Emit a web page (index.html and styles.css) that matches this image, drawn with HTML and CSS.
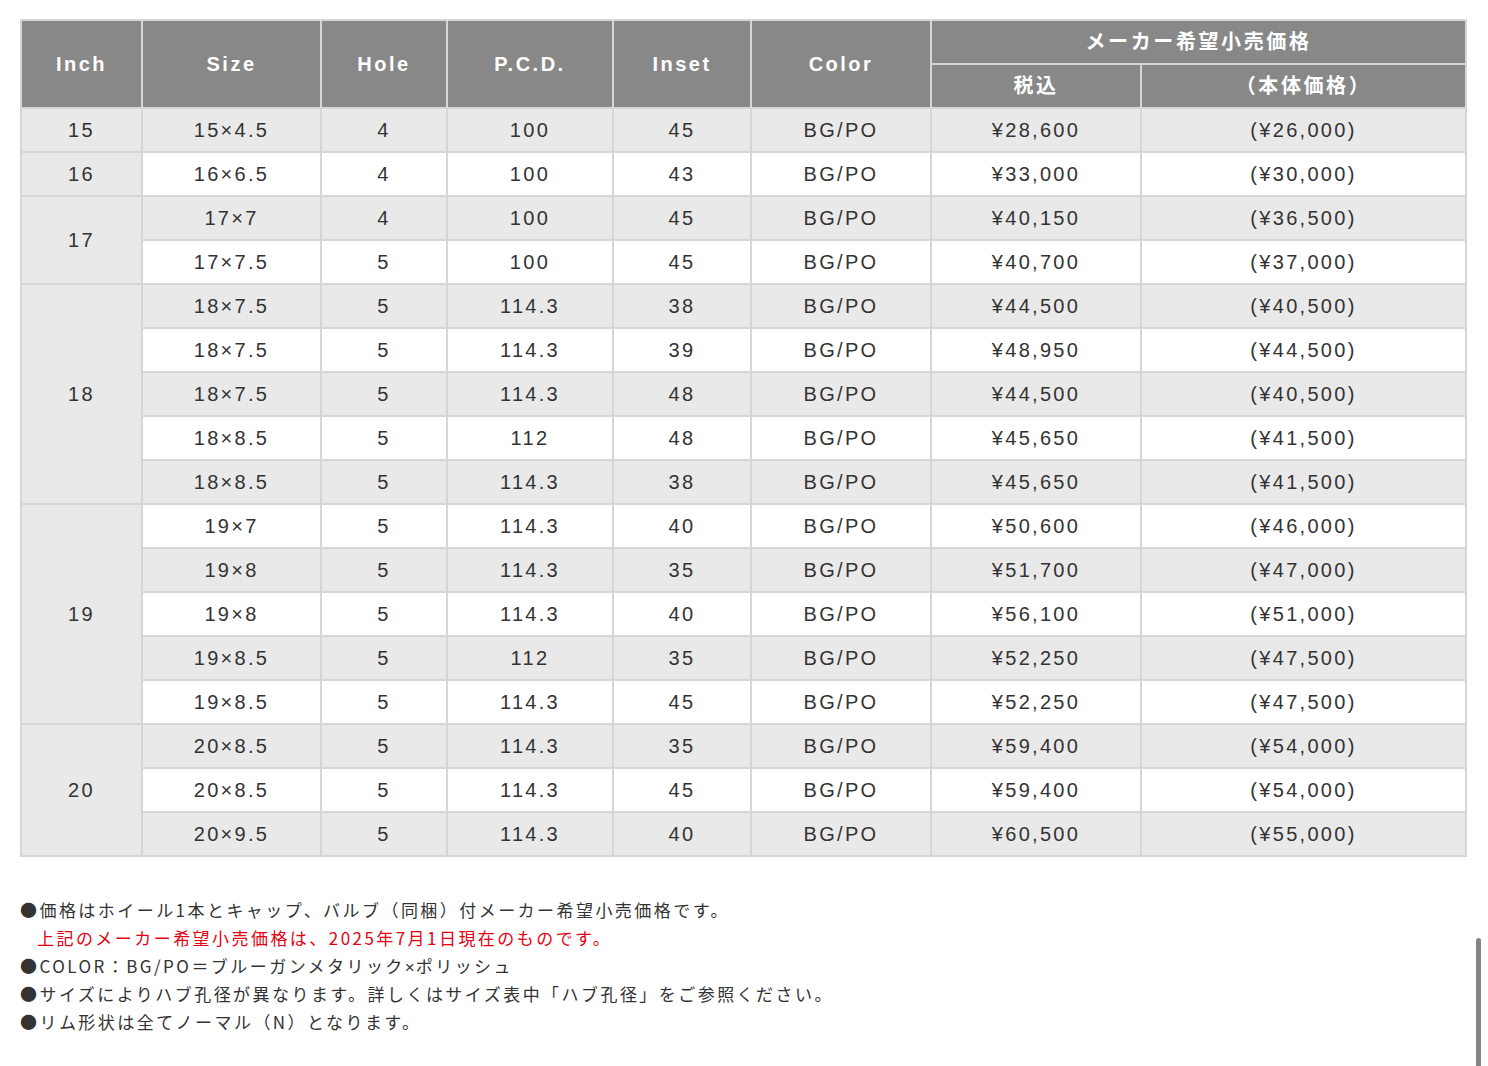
FILE: index.html
```html
<!DOCTYPE html>
<html lang="ja">
<head>
<meta charset="utf-8">
<title>Size table</title>
<link rel="stylesheet" href="styles.css">
</head>
<body>
<div class="page">
  <table class="spec">
    <colgroup>
      <col class="c-inch"><col class="c-size"><col class="c-hole"><col class="c-pcd"><col class="c-inset"><col class="c-color"><col class="c-tax"><col class="c-base">
    </colgroup>
    <thead>
      <tr>
        <th rowspan="2">Inch</th>
        <th rowspan="2">Size</th>
        <th rowspan="2">Hole</th>
        <th rowspan="2">P.C.D.</th>
        <th rowspan="2">Inset</th>
        <th rowspan="2">Color</th>
        <th colspan="2" class="jp">メーカー希望小売価格</th>
      </tr>
      <tr>
        <th class="jp">税込</th>
        <th class="jp">（本体価格）</th>
      </tr>
    </thead>
    <tbody>
      <tr><td class="inch">15</td><td>15×4.5</td><td>4</td><td>100</td><td>45</td><td>BG/PO</td><td>¥28,600</td><td>(¥26,000)</td></tr>
      <tr><td class="inch">16</td><td>16×6.5</td><td>4</td><td>100</td><td>43</td><td>BG/PO</td><td>¥33,000</td><td>(¥30,000)</td></tr>
      <tr><td class="inch" rowspan="2">17</td><td>17×7</td><td>4</td><td>100</td><td>45</td><td>BG/PO</td><td>¥40,150</td><td>(¥36,500)</td></tr>
      <tr><td>17×7.5</td><td>5</td><td>100</td><td>45</td><td>BG/PO</td><td>¥40,700</td><td>(¥37,000)</td></tr>
      <tr><td class="inch" rowspan="5">18</td><td>18×7.5</td><td>5</td><td>114.3</td><td>38</td><td>BG/PO</td><td>¥44,500</td><td>(¥40,500)</td></tr>
      <tr><td>18×7.5</td><td>5</td><td>114.3</td><td>39</td><td>BG/PO</td><td>¥48,950</td><td>(¥44,500)</td></tr>
      <tr><td>18×7.5</td><td>5</td><td>114.3</td><td>48</td><td>BG/PO</td><td>¥44,500</td><td>(¥40,500)</td></tr>
      <tr><td>18×8.5</td><td>5</td><td>112</td><td>48</td><td>BG/PO</td><td>¥45,650</td><td>(¥41,500)</td></tr>
      <tr><td>18×8.5</td><td>5</td><td>114.3</td><td>38</td><td>BG/PO</td><td>¥45,650</td><td>(¥41,500)</td></tr>
      <tr><td class="inch" rowspan="5">19</td><td>19×7</td><td>5</td><td>114.3</td><td>40</td><td>BG/PO</td><td>¥50,600</td><td>(¥46,000)</td></tr>
      <tr><td>19×8</td><td>5</td><td>114.3</td><td>35</td><td>BG/PO</td><td>¥51,700</td><td>(¥47,000)</td></tr>
      <tr><td>19×8</td><td>5</td><td>114.3</td><td>40</td><td>BG/PO</td><td>¥56,100</td><td>(¥51,000)</td></tr>
      <tr><td>19×8.5</td><td>5</td><td>112</td><td>35</td><td>BG/PO</td><td>¥52,250</td><td>(¥47,500)</td></tr>
      <tr><td>19×8.5</td><td>5</td><td>114.3</td><td>45</td><td>BG/PO</td><td>¥52,250</td><td>(¥47,500)</td></tr>
      <tr><td class="inch" rowspan="3">20</td><td>20×8.5</td><td>5</td><td>114.3</td><td>35</td><td>BG/PO</td><td>¥59,400</td><td>(¥54,000)</td></tr>
      <tr><td>20×8.5</td><td>5</td><td>114.3</td><td>45</td><td>BG/PO</td><td>¥59,400</td><td>(¥54,000)</td></tr>
      <tr><td>20×9.5</td><td>5</td><td>114.3</td><td>40</td><td>BG/PO</td><td>¥60,500</td><td>(¥55,000)</td></tr>
    </tbody>
  </table>

  <ul class="notes">
    <li>●価格はホイール1本とキャップ、バルブ（同梱）付メーカー希望小売価格です。</li>
    <li class="red">上記のメーカー希望小売価格は、2025年7月1日現在のものです。</li>
    <li>●COLOR：BG/PO＝ブルーガンメタリック<span class="times">×</span>ポリッシュ</li>
    <li>●サイズによりハブ孔径が異なります。詳しくはサイズ表中「ハブ孔径」をご参照ください。</li>
    <li>●リム形状は全てノーマル（N）となります。</li>
  </ul>
</div>
<div class="scroll-thumb"></div>
</body>
</html>
```

FILE: styles.css
```css
html, body {
  margin: 0;
  padding: 0;
  background: #fff;
}

body {
  font-family: "Liberation Sans", "Noto Sans CJK JP", sans-serif;
  color: #333;
  overflow: hidden;
}

.page {
  padding: 19px 21px 20px 20px;
}

.spec {
  width: 100%;
  border-collapse: collapse;
  table-layout: fixed;
  border: 2px solid #d2d2d2;
}

.c-inch { width: 121px; }
.c-size { width: 179px; }
.c-hole { width: 126px; }
.c-pcd { width: 166px; }
.c-inset { width: 138px; }
.c-color { width: 180px; }
.c-tax { width: 210px; }
.c-base { width: 325px; }

.spec th,
.spec td {
  border: 2px solid #d6d6d6;
  text-align: center;
  vertical-align: middle;
  padding: 0;
  height: 42px;
}

.spec th {
  background: #888;
  color: #fff;
  font-weight: bold;
  font-size: 20px;
  letter-spacing: 2.5px;
  border-color: #d6d6d6;
}

.spec th.jp {
  font-family: "Noto Sans CJK JP", sans-serif;
  letter-spacing: 2.6px;
  padding-bottom: 4px;
  height: 38px;
}

.spec td {
  font-size: 20px;
  letter-spacing: 2.3px;
  color: #333;
  background: #fff;
}

.spec tbody tr:nth-child(odd) td {
  background: #e9e9e9;
}

.spec tbody td.inch {
  background: #e9e9e9;
}

.notes {
  list-style: none;
  margin: 39px 0 0 0;
  padding: 0;
  font-family: "Noto Sans CJK JP", sans-serif;
  font-size: 17px;
  line-height: 28px;
  letter-spacing: 2.45px;
  color: #333;
}

.notes li {
  margin: 0;
}

.notes .times {
  font-family: "Liberation Sans", sans-serif;
  letter-spacing: 1px;
  line-height: 1;
}

.notes .red {
  color: #e60012;
  padding-left: 17px;
}

.scroll-thumb {
  position: fixed;
  right: 7px;
  bottom: 0;
  width: 5px;
  height: 128px;
  border-radius: 3px 3px 0 0;
  background: #858585;
}
```
